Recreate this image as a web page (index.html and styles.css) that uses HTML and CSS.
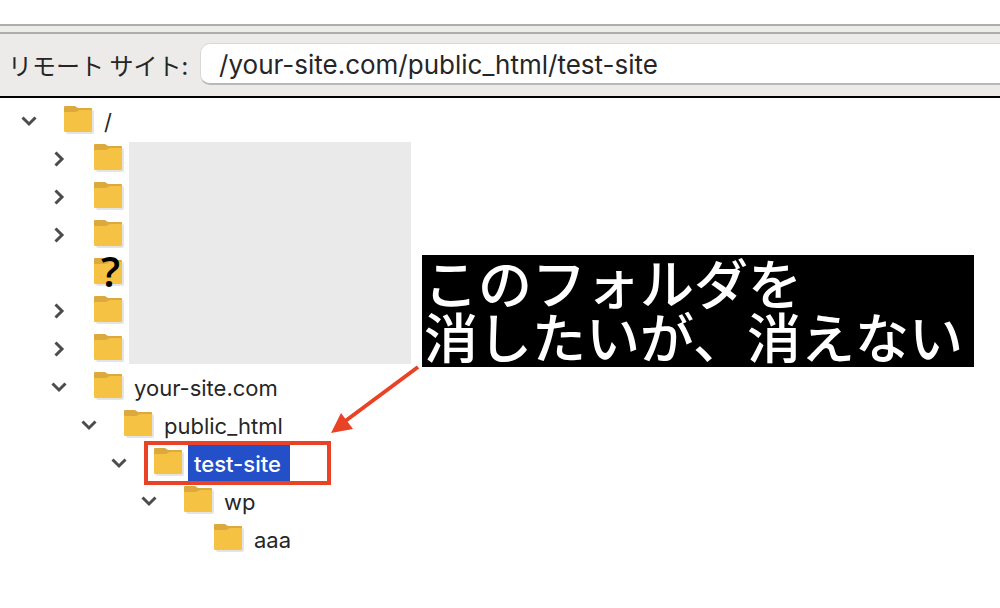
FILE: index.html
```html
<!DOCTYPE html>
<html lang="ja">
<head>
    <meta charset="UTF-8">
    <meta name="viewport" content="width=device-width, initial-scale=1">
    <title>リモート サイト</title>
    <link rel="stylesheet" href="styles.css">
</head>
<body>
    <!-- shared icons -->
    <svg class="icon-defs" width="0" height="0" aria-hidden="true">
        <symbol id="folder" viewBox="0 0 30 28">
            <path d="M2 4h26a2 2 0 0 1 2 2v20a2 2 0 0 1-2 2H4a2 2 0 0 1-2-2z" fill="#e4e4e4" />
            <path d="M0 1a1 1 0 0 1 1-1h10l3 2h13a1 1 0 0 1 1 1v12H0z" fill="#dcaa3c" />
            <path d="M0 7q0-1 1-1h10q2 0 3-1t3-1h10q1 0 1 1v20q0 1-1 1H1q-1 0-1-1z" fill="#f5c244" />
        </symbol>
        <symbol id="chevron" viewBox="0 0 16 16">
            <path d="M1.500 4.500l6.500 6.500 6.500-6.500" fill="none" stroke="#4c4c4c" stroke-width="3" />
        </symbol>
    </svg>

    <div class="splitter"></div>
    <form class="path-bar">
        <label for="remotePath">リモート サイト:</label>
        <input type="text" id="remotePath" value="/your-site.com/public_html/test-site">
    </form>

    <main class="site">
        <ul class="tree">
            <li>
                <div class="row">
                    <button type="button" class="toggle open" aria-label="/"><svg><use href="#chevron" /></svg></button>
                    <svg class="folder"><use href="#folder" /></svg>
                    <span class="name">/</span>
                </div>
                <ul>
                    <li><div class="row">
                        <button type="button" class="toggle" aria-label="フォルダ1"><svg><use href="#chevron" /></svg></button>
                        <svg class="folder"><use href="#folder" /></svg>
                    </div></li>
                    <li><div class="row">
                        <button type="button" class="toggle" aria-label="フォルダ2"><svg><use href="#chevron" /></svg></button>
                        <svg class="folder"><use href="#folder" /></svg>
                    </div></li>
                    <li><div class="row">
                        <button type="button" class="toggle" aria-label="フォルダ3"><svg><use href="#chevron" /></svg></button>
                        <svg class="folder"><use href="#folder" /></svg>
                    </div></li>
                    <li><div class="row">
                        <span class="toggle"></span>
                        <span class="unknown">
                            <svg class="folder"><use href="#folder" /></svg>
                            <span class="mark">?</span>
                        </span>
                    </div></li>
                    <li><div class="row">
                        <button type="button" class="toggle" aria-label="フォルダ4"><svg><use href="#chevron" /></svg></button>
                        <svg class="folder"><use href="#folder" /></svg>
                    </div></li>
                    <li><div class="row">
                        <button type="button" class="toggle" aria-label="フォルダ5"><svg><use href="#chevron" /></svg></button>
                        <svg class="folder"><use href="#folder" /></svg>
                    </div></li>
                    <li>
                        <div class="row">
                            <button type="button" class="toggle open" aria-label="your-site.com"><svg><use href="#chevron" /></svg></button>
                            <svg class="folder"><use href="#folder" /></svg>
                            <span class="name">your-site.com</span>
                        </div>
                        <ul>
                            <li>
                                <div class="row">
                                    <button type="button" class="toggle open" aria-label="public_html"><svg><use href="#chevron" /></svg></button>
                                    <svg class="folder"><use href="#folder" /></svg>
                                    <span class="name">public_html</span>
                                </div>
                                <ul>
                                    <li>
                                        <div class="row">
                                            <button type="button" class="toggle open" aria-label="test-site"><svg><use href="#chevron" /></svg></button>
                                            <svg class="folder"><use href="#folder" /></svg>
                                            <span class="name selected">test-site</span>
                                            <span class="frame"></span>
                                        </div>
                                        <ul>
                                            <li>
                                                <div class="row">
                                                    <button type="button" class="toggle open" aria-label="wp"><svg><use href="#chevron" /></svg></button>
                                                    <svg class="folder"><use href="#folder" /></svg>
                                                    <span class="name">wp</span>
                                                </div>
                                                <ul>
                                                    <li><div class="row">
                                                        <span class="toggle"></span>
                                                        <svg class="folder"><use href="#folder" /></svg>
                                                        <span class="name">aaa</span>
                                                    </div></li>
                                                </ul>
                                            </li>
                                        </ul>
                                    </li>
                                </ul>
                            </li>
                        </ul>
                    </li>
                </ul>
            </li>
        </ul>

        <!-- notes over the tree -->
        <div class="mask"></div>
        <p class="callout">このフォルダを<br>消したいが、消えない</p>
        <svg class="arrow" width="90" height="70" viewBox="0 0 90 70" aria-hidden="true">
            <path d="M88 2L14 57" stroke="#ea4226" stroke-width="4" />
            <path d="M1 68l10-20 12 16z" fill="#ea4226" />
        </svg>
    </main>
</body>
</html>
```

FILE: styles.css
```css
* { box-sizing: border-box;}

body {
    margin: 0;
    padding-top: 24px;
    background: #fff;
    color: #262626;
    font-family: Inter, "Noto Sans CJK JP", sans-serif;
    font-size: 22px;
    overflow: hidden;
}

.icon-defs { position: absolute;}

.splitter {
    height: 10px;
    background: #ececeb;
    border-top: 2px solid #adadad;
    border-bottom: 2px solid #adadad;
}

.path-bar {
    display: flex;
    align-items: center;
    gap: 12px;
    height: 64px;
    padding: 0 0 2px 8px;
    background: #ecebe9;
    border-bottom: 2px solid #000;
}

.path-bar label {
    font-family: "Noto Sans CJK JP", sans-serif;
    font-size: 24px;
    white-space: nowrap;
}

.path-bar input {
    flex: 1;
    min-width: 0;
    height: 42px;
    margin-right: -12px;
    padding: 1px 18px 0;
    border: 1px solid #d8d8d8;
    border-bottom: 2px solid #b8b8b8;
    border-radius: 10px;
    background: #fff;
    color: #262626;
    font-family: Inter, sans-serif;
    font-size: 26px;
    outline: none;
}

.site {
    position: relative;
    padding: 4px 0 0 20px;
}

.tree, .tree ul {
    margin: 0;
    padding: 0;
    list-style: none;
}

.tree ul { padding-left: 30px;}

.row {
    position: relative;
    display: flex;
    align-items: center;
    height: 38px;
}

.toggle {
    width: 18px;
    height: 18px;
    margin-right: 26px;
    padding: 1px;
    border: 0;
    background: none;
}

.toggle svg {
    display: block;
    width: 16px;
    height: 16px;
    transform: rotate(-90deg);
}

.toggle.open svg { transform: none;}

.folder {
    display: block;
    width: 30px;
    height: 28px;
    margin-bottom: 2px;
}

.name {
    height: 36px;
    margin-left: 4px;
    padding: 0 6px;
    line-height: 38px;
}

.name.selected {
    padding: 0 9px 0 6px;
    background: #234fc9;
    color: #fff;
    font-weight: 500;
}

.unknown { position: relative;}

.mark {
    position: absolute;
    top: -6px;
    left: 7px;
    color: #000;
    font-family: "Open Sans", sans-serif;
    font-size: 42px;
    font-weight: 600;
    line-height: 38px;
}

/* red frame round the selected folder */
.frame {
    position: absolute;
    top: -3px;
    left: 34px;
    width: 187px;
    height: 44px;
    border: 4px solid #ea4226;
}

.mask {
    position: absolute;
    top: 44px;
    left: 129px;
    width: 282px;
    height: 222px;
    background: #eaeaea;
}

.callout {
    position: absolute;
    top: 157px;
    left: 422px;
    margin: 0;
    padding: 0 11px 4px 2px;
    background: #000;
    color: #fff;
    font-family: "Noto Sans CJK JP", sans-serif;
    font-size: 54px;
    font-weight: 500;
    line-height: 54px;
    white-space: nowrap;
}

.arrow {
    position: absolute;
    top: 267px;
    left: 330px;
}
```
